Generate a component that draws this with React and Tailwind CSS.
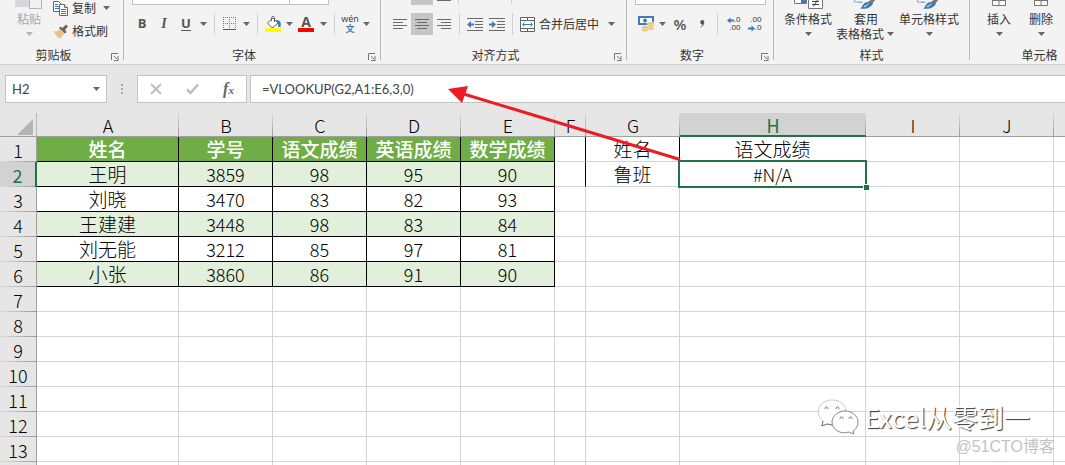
import { useState } from 'react'
import clsx from 'clsx'

const COLUMNS = [
  { name: 'A', width: 'w-[142px]' },
  { name: 'B', width: 'w-[94px]' },
  { name: 'C', width: 'w-[94px]' },
  { name: 'D', width: 'w-[94px]' },
  { name: 'E', width: 'w-[94px]' },
  { name: 'F', width: 'w-[31px]' },
  { name: 'G', width: 'w-[94px]' },
  { name: 'H', width: 'w-[186px]' },
  { name: 'I', width: 'w-[94px]' },
  { name: 'J', width: 'w-[94px]' },
  { name: '', width: '' },
]

const CELLS = [
  ['姓名', '学号', '语文成绩', '英语成绩', '数学成绩', '', '姓名', '语文成绩'],
  ['王明', '3859', '98', '95', '90', '', '鲁班', '#N/A'],
  ['刘晓', '3470', '83', '82', '93'],
  ['王建建', '3448', '98', '83', '84'],
  ['刘无能', '3212', '85', '97', '81'],
  ['小张', '3860', '86', '91', '90'],
]

const ROW_COUNT = 13
const SELECTED = { row: 1, col: 7 }

function Caret({ muted }) {
  return (
    <svg className={clsx('h-1 w-[7px]', muted ? 'fill-[#b5b5b5]' : 'fill-[#666]')} viewBox="0 0 7 4">
      <path d="M0 0h7L3.5 4z" />
    </svg>
  )
}

function CaretButton({ label }) {
  return (
    <button aria-label={label} className="flex h-full w-3 items-center justify-center">
      <Caret />
    </button>
  )
}

function Divider({ tight }) {
  return <span className={clsx('h-full w-px shrink-0 bg-[#d0d0d0]', tight ? 'mx-1' : 'mx-[5px]')} />
}

function ToolButton({ label, width = 'w-5', active, children }) {
  return (
    <button
      aria-label={label}
      className={clsx('flex h-full shrink-0 items-center justify-center text-[#555]', width, active && 'bg-[#c6c6c6]')}
    >
      {children}
    </button>
  )
}

function GroupLabel({ children, launcher = true }) {
  return (
    <div className="absolute inset-x-0 top-[49px] flex h-3 items-center">
      <span className="flex-1 text-center leading-3">{children}</span>
      {launcher && (
        <button aria-label={`${children}设置`} className="flex w-4 justify-center">
          <svg className="mt-1 h-2 w-2" viewBox="0 0 8 8" fill="none" stroke="#777">
            <path d="M0.5 7V0.5H7M3 3l3 3" />
            <path d="M7.5 3v5H3V7h3.500V3z" fill="#777" stroke="none" />
          </svg>
        </button>
      )}
    </div>
  )
}

function Group({ width, launcher, label, children }) {
  return (
    <section className={clsx('relative h-[60px] shrink-0 border-r border-[#b8b8b8]', width)}>
      {children}
      <GroupLabel launcher={launcher}>{label}</GroupLabel>
    </section>
  )
}

function AlignIcon({ kind }) {
  const d = {
    left: 'M0 .5h14M0 3.5h10M0 6.500h14M0 9.500h10',
    center: 'M0 .5h14M2 3.500h10M0 6.500h14M2 9.500h10',
    right: 'M0 .5h14M4 3.500h10M0 6.500h14M4 9.500h10',
  }[kind]
  return (
    <svg className="h-[11px] w-3.5" viewBox="0 0 14 11" fill="none" stroke="#6a6a6a">
      <path d={d} />
    </svg>
  )
}

function IndentIcon({ outdent }) {
  return (
    <svg className="h-[13px] w-4" viewBox="0 0 16 13" fill="none" stroke="#6a6a6a">
      <path d="M0 .5h16M8 3.500h8M8 6.500h8M8 9.500h8M0 12.500h16" />
      <path
        d={outdent ? 'M0 6.500L4 3v2.500h3v2H4V10z' : 'M7 6.500L3 3v2.500H0v2h3V10z'}
        fill="#3f7ab8"
        stroke="none"
      />
    </svg>
  )
}

function DecimalIcon({ more }) {
  const arrow = (
    <svg className="h-[7px] w-[7px] fill-[#3f7ab8]" viewBox="0 0 7 7">
      <path d={more ? 'M0 3.500L3.500 .5v2H7v2H3.500v2z' : 'M7 3.500L3.500 .5v2H0v2h3.500v2z'} />
    </svg>
  )
  return (
    <span className="flex w-[15px] flex-col items-end font-['Liberation_Sans'] text-[8px] leading-2 text-[#333]">
      <span className="flex items-center">
        {more && arrow}
        {more ? '.0' : '.00'}
      </span>
      <span className="flex items-center">
        {!more && arrow}
        {more ? '.00' : '.0'}
      </span>
    </span>
  )
}

function ClipboardGroup() {
  return (
    <Group width="w-[124px]" label="剪贴板">
      <div className="flex pl-2">
        <button className="flex w-[42px] flex-col items-center text-[#a6a6a6]">
          <svg className="h-[10px] w-7" viewBox="0 0 28 10">
            <path d="M0 0h14v7H0z" fill="#dad5db" />
            <path d="M14.500-1h12v9.500h-12z" fill="#f5eef6" stroke="#b9afbd" />
          </svg>
          <span className="leading-[18px]">粘贴</span>
          <span className="flex h-3 items-center">
            <Caret muted />
          </span>
        </button>
        <div className="flex flex-col pl-[3px]">
          <div className="flex h-4 items-center">
            <button className="flex items-center gap-[3px] leading-4">
              <svg className="h-[15px] w-4" viewBox="0 0 16 15" fill="#fff" stroke="#666">
                <path d="M.5 .5h5l3 3v7h-8z" />
                <path d="M2 3.500h3M2 5.500h4M2 7.500h4" stroke="#3f7ab8" />
                <path d="M6.500 3.500h5l3 3v8h-8z" />
                <path d="M11.500 3.500v3h3" />
                <path d="M8 8.500h5M8 10.500h5M8 12.500h5" stroke="#3f7ab8" />
              </svg>
              复制
            </button>
            <span className="pl-1">
              <CaretButton label="复制选项" />
            </span>
          </div>
          <button className="mt-1.5 flex h-[18px] items-center gap-[3px] leading-4">
            <svg className="h-[15px] w-4" viewBox="0 0 16 15">
              <path d="M0 7l3.500.5L7 5l4.500 4.500L7 14.500 4.500 13z" fill="#eac282" />
              <path d="M6 4l1.500-1.500L9.500 4 13 .5l2 2L12 6l1.500 2L12 9.500z" fill="#666" />
            </svg>
            格式刷
          </button>
        </div>
      </div>
    </Group>
  )
}

function FontGroup() {
  return (
    <Group width="w-[257px]" label="字体">
      <div className="flex h-[5px] items-end overflow-hidden pl-2">
        <select aria-label="字体名称" className="h-6 w-[158px] shrink-0 appearance-none border border-[#c0c0c0] bg-white" />
        <select aria-label="字号" className="-ml-px h-6 w-10 shrink-0 appearance-none border border-[#c0c0c0] bg-white" />
      </div>
      <div className="mt-2 flex h-[22px] items-center pl-[7px] font-['Open_Sans'] text-[13px]">
        <ToolButton label="加粗" width="w-[22px]">
          <span className="font-bold">B</span>
        </ToolButton>
        <ToolButton label="倾斜" width="w-[22px]">
          <span className="font-['Liberation_Serif'] text-sm font-bold italic">I</span>
        </ToolButton>
        <ToolButton label="下划线" width="w-[22px]">
          <span className="font-bold underline underline-offset-2">U</span>
        </ToolButton>
        <CaretButton label="下划线选项" />
        <Divider />
        <ToolButton label="边框">
          <svg className="h-3.5 w-3.5" viewBox="0 0 14 14" fill="none" stroke="#777">
            <path d="M.5 0v12M6.500 0v12M12.500 0v12M0 .5h13M0 6.500h13" strokeDasharray="1 1" />
            <path d="M0 12.500h13" stroke="#555" />
          </svg>
        </ToolButton>
        <CaretButton label="边框选项" />
        <Divider />
        <ToolButton label="填充颜色">
          <svg className="h-4 w-4" viewBox="0 0 16 16">
            <path d="M11 4c4 0 5.500 2 4.500 7H13c.5-2 0-3.500-1-4.500z" fill="#3f7ab8" />
            <path d="M2.500 7L8 2l5 5-5 4.500H6.500z" fill="#fff" stroke="#666" />
            <path d="M6.500 5V1.500c0-1.300 3-1.300 3 0V6" fill="none" stroke="#666" />
            <path d="M0 12h16v4H0z" fill="#ff0" />
          </svg>
        </ToolButton>
        <CaretButton label="填充颜色选项" />
        <ToolButton label="字体颜色" width="w-[22px]">
          <span className="flex w-4 flex-col items-center border-b-4 border-[#f00] text-sm leading-3 font-bold">A</span>
        </ToolButton>
        <CaretButton label="字体颜色选项" />
        <Divider />
        <ToolButton label="拼音">
          <span className="flex flex-col items-center text-[9px] leading-[10px] text-[#333]">
            <span>wén</span>
            <span className="font-['Noto_Sans_CJK_SC'] font-bold text-[#3f7ab8]">文</span>
          </span>
        </ToolButton>
        <CaretButton label="拼音选项" />
      </div>
    </Group>
  )
}

function AlignGroup() {
  return (
    <Group width="w-[246px]" label="对齐方式">
      <div className="flex h-[5px] items-start pl-[30px]">
        <span className="h-full w-[22px] bg-[#c6c6c6]" />
        <span className="ml-1 h-px w-3.5 bg-[#6a6a6a]" />
        <span className="ml-[7px] h-1 w-px bg-[#d0d0d0]" />
        <span className="ml-[52px] h-1 w-px bg-[#d0d0d0]" />
      </div>
      <div className="mt-2 flex h-[22px] items-center pl-2">
        <ToolButton label="左对齐" width="w-[22px]">
          <AlignIcon kind="left" />
        </ToolButton>
        <ToolButton label="居中" width="w-[22px]" active>
          <AlignIcon kind="center" />
        </ToolButton>
        <ToolButton label="右对齐" width="w-[22px]">
          <AlignIcon kind="right" />
        </ToolButton>
        <Divider tight />
        <ToolButton label="减少缩进" width="w-[22px]">
          <IndentIcon outdent />
        </ToolButton>
        <ToolButton label="增加缩进" width="w-[22px]">
          <IndentIcon />
        </ToolButton>
        <Divider tight />
        <button className="flex items-center gap-1 pr-1.5 pl-[3px]">
          <svg className="h-[15px] w-[15px]" viewBox="0 0 15 15" fill="#fff" stroke="#666">
            <path d="M.5 .5h14v14H.5zM.5 3.500h14M.5 11.500h14M7.500 .5v3M7.500 11.500v3" />
            <path d="M3 7.500h9M4.500 5.500l-2 2 2 2M10.500 5.500l2 2-2 2" fill="none" stroke="#3f7ab8" />
          </svg>
          合并后居中
        </button>
        <CaretButton label="合并选项" />
      </div>
    </Group>
  )
}

function NumberGroup() {
  return (
    <Group width="w-[147px]" label="数字">
      <div className="flex h-[5px] items-end overflow-hidden pl-2">
        <select aria-label="数字格式" className="h-6 w-[131px] shrink-0 appearance-none border border-[#c0c0c0] bg-white" />
      </div>
      <div className="mt-2 flex h-[22px] items-center pl-[9px]">
        <ToolButton label="会计数字格式">
          <svg className="h-4 w-4" viewBox="0 0 16 16">
            <path d="M0 0h16v9H0z" fill="#3f7ab8" />
            <path d="M2 2h12v5H2z" fill="#fff" />
            <circle cx="7" cy="4.500" r="2" fill="#3f7ab8" />
            <g fill="#eac282" stroke="#f3f3f3" strokeWidth=".6">
              <ellipse cx="12.500" cy="12.500" rx="3.500" ry="1.800" />
              <ellipse cx="12.500" cy="10" rx="3.500" ry="1.800" />
              <ellipse cx="12.500" cy="7.500" rx="3.500" ry="1.800" />
              <ellipse cx="7" cy="14" rx="3.500" ry="1.800" />
              <ellipse cx="7" cy="11.500" rx="3.500" ry="1.800" />
            </g>
          </svg>
        </ToolButton>
        <CaretButton label="会计数字格式选项" />
        <ToolButton label="百分比样式" width="w-6">
          <span className="font-['Open_Sans'] text-[15px] leading-5 font-semibold">%</span>
        </ToolButton>
        <ToolButton label="千位分隔样式">
          <svg className="h-2 w-[5px] fill-[#555]" viewBox="0 0 5 8">
            <path d="M2.500 0C5 0 5.500 5 .5 7.500L.3 7C2 6 2.500 5 2.300 4.500-.5 4.500-.5 0 2.500 0z" />
          </svg>
        </ToolButton>
        <Divider />
        <ToolButton label="增加小数位数">
          <DecimalIcon more />
        </ToolButton>
        <ToolButton label="减少小数位数" width="w-[22px]">
          <DecimalIcon />
        </ToolButton>
      </div>
    </Group>
  )
}

function LargeButton({ width, icon, lines }) {
  const twoLines = lines.length > 1
  return (
    <button className={clsx('flex shrink-0 flex-col items-center', width)}>
      <svg className="h-[10px] w-8" viewBox="0 0 32 10">
        {icon}
      </svg>
      <span className="leading-[18px] whitespace-nowrap">{lines[0]}</span>
      {twoLines ? (
        <span className="flex items-center leading-3 whitespace-nowrap">
          {lines[1]}
          <span className="flex w-3 justify-center">
            <Caret />
          </span>
        </span>
      ) : (
        <span className="flex h-3 items-center">
          <Caret />
        </span>
      )}
    </button>
  )
}

const brushIcon = (
  <>
    <path d="M4.500-1v3h8M8 2.500h4" fill="none" stroke="#8fa9c4" />
    <path d="M10 8.500c2-.5 2-3 4-5 3-2.500 8-1.500 9 0-2 4-6 6-13 5z" fill="#3f7ab8" />
    <path d="M18 2l4-3 4 0-4 5z" fill="#777" />
    <path d="M14 6.500c2 0 3.500-1.500 4-3" fill="none" stroke="#fff" />
  </>
)

const gridIcon = <path d="M9.500-1v6.500h13V-1M16-1v6.500M9.500 0.500h13" fill="#fff" stroke="#777" />

function StyleGroups() {
  return (
    <>
      <Group width="w-[196px]" label="样式" launcher={false}>
        <div className="flex pl-1.5">
          <LargeButton
            width="w-14"
            lines={['条件格式']}
            icon={
              <>
                <path d="M2.500-1v4.500h12V-1z" fill="#fff" stroke="#777" />
                <path d="M9 0h5v3H9z" fill="#3f7ab8" />
                <path d="M16.500-1h14v9.500h-14z" fill="#fff" stroke="#777" />
                <path d="M20 1.500h7M20 4.500h7M25.500 0l-4 6.500" fill="none" stroke="#444" />
              </>
            }
          />
          <LargeButton width="w-[60px]" lines={['套用', '表格格式']} icon={brushIcon} />
          <LargeButton width="w-[66px]" lines={['单元格样式']} icon={brushIcon} />
        </div>
      </Group>
      <Group width="w-[140px]" label="单元格" launcher={false}>
        <div className="flex pl-2">
          <LargeButton width="w-[42px]" lines={['插入']} icon={gridIcon} />
          <LargeButton width="w-[42px]" lines={['删除']} icon={gridIcon} />
        </div>
      </Group>
    </>
  )
}

function FormulaBar() {
  const [formula, setFormula] = useState('=VLOOKUP(G2,A1:E6,3,0)')
  const [cellName, setCellName] = useState('H2')

  return (
    <div className="flex h-12 shrink-0 items-start pt-2.5 pl-[5px] font-[Lato] text-[13px] text-[#444]">
      <div className="flex h-7 w-[102px] shrink-0 items-center border border-[#c3c3c3] bg-white">
        <input
          aria-label="名称框"
          value={cellName}
          onChange={(e) => setCellName(e.target.value)}
          className="h-full min-w-0 flex-1 pl-1.5 outline-none"
        />
        <button aria-label="名称列表" className="flex h-full w-5 items-center justify-center">
          <Caret />
        </button>
      </div>
      <svg className="mx-[13px] h-7 w-1 shrink-0 fill-[#a9a9a9]" viewBox="0 0 4 28">
        <path d="M1 9h2v2H1zM1 13h2v2H1zM1 17h2v2H1z" />
      </svg>
      <div className="flex h-7 w-[110px] shrink-0 items-center justify-around border border-[#c3c3c3] bg-white">
        <button aria-label="取消">
          <svg className="h-3 w-3" viewBox="0 0 12 12" fill="none" stroke="#bdbdbd" strokeWidth="1.800">
            <path d="M1 1l10 10M11 1L1 11" />
          </svg>
        </button>
        <button aria-label="输入">
          <svg className="h-3 w-[13px]" viewBox="0 0 13 12" fill="none" stroke="#bdbdbd" strokeWidth="2.500">
            <path d="M1 6.500L4.500 10 12 1.500" />
          </svg>
        </button>
        <button aria-label="插入函数" className="font-['Liberation_Serif'] text-base leading-none font-bold text-[#666] italic">
          f<span className="text-[11px]">x</span>
        </button>
      </div>
      <input
        aria-label="编辑栏"
        value={formula}
        onChange={(e) => setFormula(e.target.value)}
        className="ml-[3px] h-7 min-w-0 flex-1 border border-r-0 border-[#c3c3c3] bg-white px-[11px] outline-none"
      />
    </div>
  )
}

function cellClass(row, col) {
  const inTable = row < CELLS.length && col < 5
  // G1:G2 keep their own left and right borders
  const blackRight = inTable || (row < 2 && (col === 5 || col === 6))
  return clsx(
    'border-b p-0 text-center whitespace-nowrap',
    col < COLUMNS.length - 1 && 'border-r',
    blackRight ? 'border-r-black' : 'border-r-[#d4d4d4]',
    inTable ? 'border-b-black' : 'border-b-[#d4d4d4]',
    inTable && row === 0 ? 'bg-[#70ad47] font-medium text-white' : 'font-light',
    inTable && row % 2 === 1 && 'bg-[#e2efda]',
    row === SELECTED.row && col === SELECTED.col && 'relative'
  )
}

function Sheet() {
  return (
    <table className="w-full min-w-[1060px] table-fixed border-separate border-spacing-0 bg-white text-[19px] leading-6 text-black">
      <thead>
        <tr className="h-6">
          <th className="w-[37px] border-r border-b border-[#a0a0a0] border-r-[#b5b5b5] bg-[#e6e6e6] p-0">
            <svg className="mt-1 ml-auto mr-[3px] h-4 w-4 fill-[#b4b4b4]" viewBox="0 0 16 16">
              <path d="M16 0v16H0z" />
            </svg>
          </th>
          {COLUMNS.map((c, i) => (
            <th
              key={i}
              scope="col"
              className={clsx(
                'h-6 bg-[length:1px_100%] bg-right bg-no-repeat p-0 pt-px text-lg leading-5',
                c.width,
                c.name && 'bg-[linear-gradient(#dcdcdc,#9c9c9c)]',
                i === SELECTED.col
                  ? 'border-b-2 border-[#217346] bg-[#d2d2d2] font-normal text-[#217346]'
                  : 'border-b border-[#a0a0a0] bg-[#e6e6e6] font-light'
              )}
            >
              {c.name}
            </th>
          ))}
        </tr>
      </thead>
      <tbody>
        {Array.from({ length: ROW_COUNT }, (_, row) => (
          <tr key={row} className="h-[25px]">
            <th
              scope="row"
              className={clsx(
                'bg-[linear-gradient(90deg,#dcdcdc,#9c9c9c)] bg-[length:100%_1px] bg-bottom bg-no-repeat p-0 text-lg leading-6',
                row === SELECTED.row
                  ? 'border-r-2 border-[#217346] bg-[#d2d2d2] font-normal text-[#217346]'
                  : 'border-r border-[#a0a0a0] bg-[#e6e6e6] font-light'
              )}
            >
              {row + 1}
            </th>
            {COLUMNS.map((c, col) => {
              const value = CELLS[row]?.[col] ?? ''
              return (
                <td key={col} className={clsx(cellClass(row, col), /^[\d#]/.test(value) && 'text-lg leading-6')}>
                  {value}
                  {row === SELECTED.row && col === SELECTED.col && (
                    <>
                      <span className="absolute -inset-0.5 border-2 border-[#217346]" />
                      <span className="absolute -right-1 -bottom-1 h-1.5 w-1.5 border-t border-l border-white bg-[#217346]" />
                    </>
                  )}
                </td>
              )
            })}
          </tr>
        ))}
        {/* partly visible row at the bottom edge */}
        <tr className="h-[25px]">
          <th className="border-r border-[#a0a0a0] bg-[#e6e6e6] p-0" />
          {COLUMNS.map((c, col) => (
            <td key={col} className={cellClass(ROW_COUNT, col)} />
          ))}
        </tr>
      </tbody>
    </table>
  )
}

function Arrow() {
  return (
    <svg className="pointer-events-none absolute top-[84px] left-[448px] h-20 w-[240px]" viewBox="0 0 240 80" fill="#ec1c24">
      <path d="M0 5L20 2 14 19z" />
      <path d="M14 9.500l218 66" stroke="#ec1c24" strokeWidth="3" />
    </svg>
  )
}

function Watermark() {
  return (
    <div className="pointer-events-none absolute right-2.5 bottom-1.5 flex flex-col items-end">
      <div className="mr-[25px] flex items-center gap-1.5 text-[26px] leading-9 text-white [text-shadow:1px_1px_1px_#333]">
        <svg className="h-9 w-[42px]" viewBox="0 0 42 36" fill="#fff">
          <path
            d="M5 27l1-5C-3 14 2 1 15 1c9 0 14 6 14 11-8 0-15 6-13 14-2 0-4 0-6-1z"
            stroke="#b5b5b5"
            strokeOpacity=".7"
          />
          <path d="M5 27l1-5M5 27l5-2 6 1" fill="none" stroke="#777" />
          <path
            d="M28 12c7 0 13 5 13 11 0 4-2 7-5 9l1 3-5-2c-9 3-17-3-17-10 0-6 6-11 13-11z"
            stroke="#888"
          />
          <path
            d="M8 10c0-3 3-3 3 0M19 10c0-3 3-3 3 0M23 20c0-3 3-3 3 0M32 20c0-3 3-3 3 0"
            fill="none"
            stroke="#777"
          />
        </svg>
        Excel从零到一
      </div>
      <div className="font-['Liberation_Sans','Noto_Sans_CJK_SC',sans-serif] text-base leading-6 text-[#c4c4c4]">@51CTO博客</div>
    </div>
  )
}

export default function App() {
  return (
    <div className="relative flex h-screen flex-col overflow-hidden bg-[#e6e6e6] font-['Noto_Sans_CJK_SC',sans-serif]">
      <header className="flex h-[65px] shrink-0 overflow-hidden border-b border-[#d0d0d0] bg-[#f3f3f3] text-xs text-[#333]">
        <ClipboardGroup />
        <FontGroup />
        <AlignGroup />
        <NumberGroup />
        <StyleGroups />
      </header>
      <FormulaBar />
      <main className="min-h-0 flex-1 overflow-hidden">
        <Sheet />
      </main>
      <Arrow />
      <Watermark />
    </div>
  )
}
